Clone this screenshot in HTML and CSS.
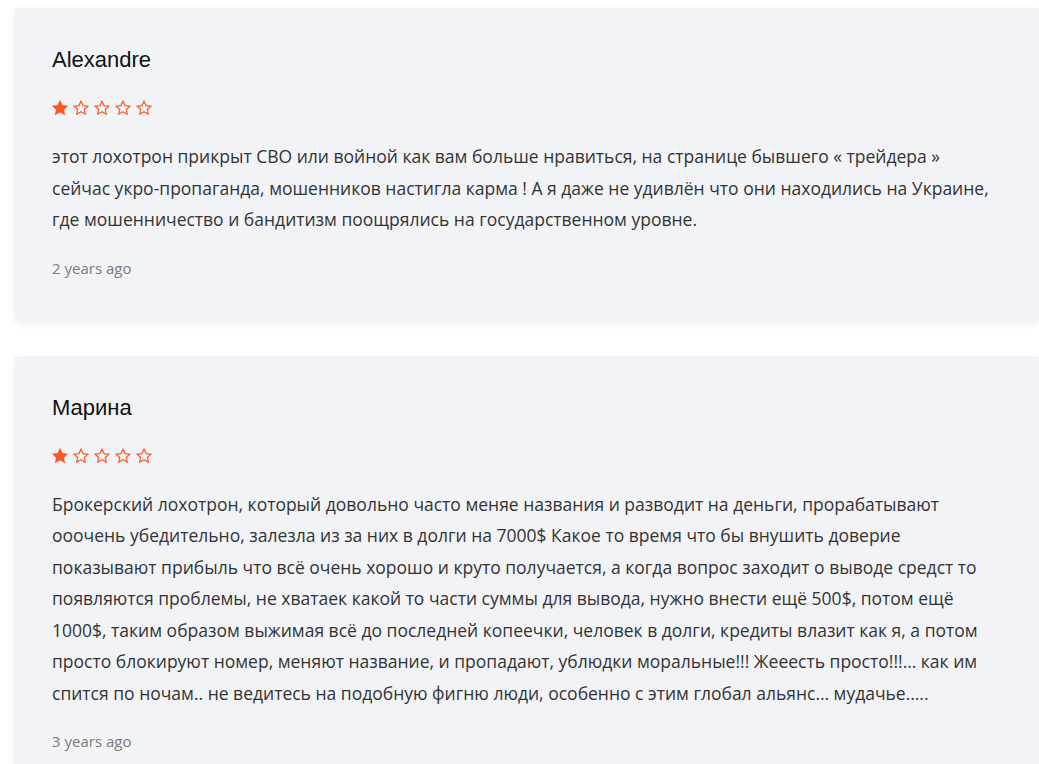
FILE: index.html
```
<!DOCTYPE html>
<html lang="ru">
<head>
  <meta charset="UTF-8">
  <title>Отзывы</title>
  <meta name="viewport" content="width=device-width, initial-scale=1">
  <link rel="stylesheet" href="styles.css">
</head>
<body>
  <svg width="0" height="0" class="defs">
    <defs>
      <path id="star" d="M8 1.2l2.05 4.4 4.8.55-3.55 3.3.95 4.75L8 11.8l-4.25 2.4.95-4.75-3.55-3.3 4.8-.55z"/>
    </defs>
  </svg>
  <div class="reviews">
    <div class="review">
      <h3 class="review-name">Alexandre</h3>
      <div class="stars">
        <svg class="star full" viewBox="0 0 16 16"><use href="#star"/></svg>
        <svg class="star" viewBox="0 0 16 16"><use href="#star"/></svg>
        <svg class="star" viewBox="0 0 16 16"><use href="#star"/></svg>
        <svg class="star" viewBox="0 0 16 16"><use href="#star"/></svg>
        <svg class="star" viewBox="0 0 16 16"><use href="#star"/></svg>
      </div>
      <p class="review-text">этот лохотрон прикрыт СВО или войной как вам больше нравиться, на странице бывшего « трейдера » сейчас укро-пропаганда, мошенников настигла карма ! А я даже не удивлён что они находились на Украине, где мошенничество и бандитизм поощрялись на государственном уровне.</p>
      <div class="review-date">2 years ago</div>
    </div>
    <div class="review">
      <h3 class="review-name">Марина</h3>
      <div class="stars">
        <svg class="star full" viewBox="0 0 16 16"><use href="#star"/></svg>
        <svg class="star" viewBox="0 0 16 16"><use href="#star"/></svg>
        <svg class="star" viewBox="0 0 16 16"><use href="#star"/></svg>
        <svg class="star" viewBox="0 0 16 16"><use href="#star"/></svg>
        <svg class="star" viewBox="0 0 16 16"><use href="#star"/></svg>
      </div>
      <p class="review-text">Брокерский лохотрон, который довольно часто меняе названия и разводит на деньги, прорабатывают ооочень убедительно, залезла из за них в долги на 7000$ Какое то время что бы внушить доверие показывают прибыль что всё очень хорошо и круто получается, а когда вопрос заходит о выводе средст то появляются проблемы, не хватаек какой то части суммы для вывода, нужно внести ещё 500$, потом ещё 1000$, таким образом выжимая всё до последней копеечки, человек в долги, кредиты влазит как я, а потом просто блокируют номер, меняют название, и пропадают, ублюдки моральные!!! Жееесть просто!!!… как им спится по ночам.. не ведитесь на подобную фигню люди, особенно с этим глобал альянс… мудачье…..</p>
      <div class="review-date">3 years ago</div>
    </div>
  </div>
</body>
</html>
```
FILE: styles.css
```
body {
  margin: 0;
  background: #fff;
  font-family: 'Open Sans', sans-serif;
  color: #333;
  overflow: hidden;
}
.defs {
  position: absolute;
}
.reviews {
  padding: 8px 0 0 15px;
  display: flex;
  flex-direction: column;
  gap: 36px;
}
.review {
  background: #f2f3f7;
  padding: 40px 37px 41px;
  box-shadow: 0 3px 8px rgba(0, 0, 0, 0.07);
}
.review-name {
  margin: 0 0 28px;
  font-family: 'Liberation Sans', Arial, sans-serif;
  font-weight: 400;
  font-size: 22px;
  line-height: 24px;
  color: #111;
}
.stars {
  display: flex;
  gap: 5px;
  height: 17px;
  margin-bottom: 24px;
}
.star {
  width: 16px;
  height: 16px;
  fill: none;
  stroke: #ff5722;
  stroke-width: 1.2;
  stroke-linejoin: miter;
}
.star.full {
  fill: #ff5722;
}
.review-text {
  margin: 0 0 22px;
  font-size: 17.5px;
  line-height: 1.8;
  color: #333;
}
.review-date {
  font-size: 15px;
  line-height: 21px;
  color: #7a7a7a;
}
```
